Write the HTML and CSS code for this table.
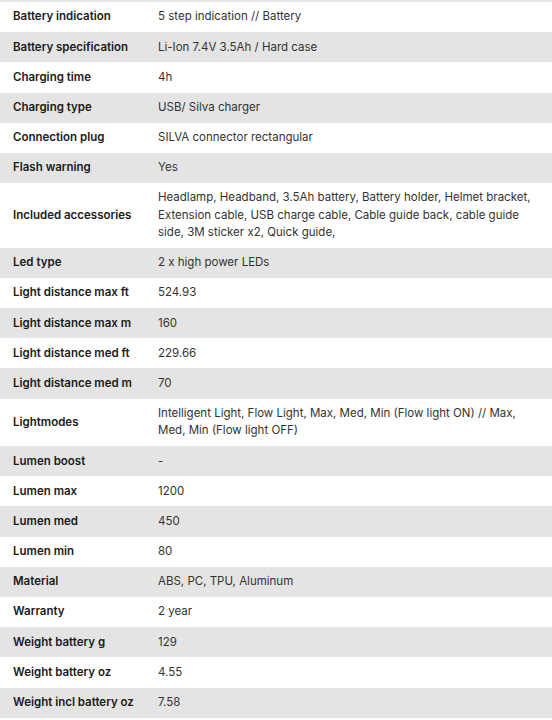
FILE: index.html
```html
<!DOCTYPE html>
<html>
<head>
<meta charset="utf-8">
<link rel="stylesheet" href="styles.css">
</head>
<body>
<div class="top"></div>
<div class="specs">
  <div class="row"><div class="k">Battery indication</div><div class="v">5 step indication // Battery</div></div>
  <div class="row"><div class="k">Battery specification</div><div class="v">Li-Ion 7.4V 3.5Ah / Hard case</div></div>
  <div class="row"><div class="k">Charging time</div><div class="v">4h</div></div>
  <div class="row"><div class="k">Charging type</div><div class="v">USB/ Silva charger</div></div>
  <div class="row"><div class="k">Connection plug</div><div class="v">SILVA connector rectangular</div></div>
  <div class="row"><div class="k">Flash warning</div><div class="v">Yes</div></div>
  <div class="row"><div class="k">Included accessories</div><div class="v">Headlamp, Headband, 3.5Ah battery, Battery holder, Helmet bracket, Extension cable, USB charge cable, Cable guide back, cable guide side, 3M sticker x2, Quick guide,</div></div>
  <div class="row"><div class="k">Led type</div><div class="v">2 x high power LEDs</div></div>
  <div class="row"><div class="k">Light distance max ft</div><div class="v">524.93</div></div>
  <div class="row"><div class="k">Light distance max m</div><div class="v">160</div></div>
  <div class="row"><div class="k">Light distance med ft</div><div class="v">229.66</div></div>
  <div class="row"><div class="k">Light distance med m</div><div class="v">70</div></div>
  <div class="row"><div class="k">Lightmodes</div><div class="v">Intelligent Light, Flow Light, Max, Med, Min (Flow light ON) // Max, Med, Min (Flow light OFF)</div></div>
  <div class="row"><div class="k">Lumen boost</div><div class="v">-</div></div>
  <div class="row"><div class="k">Lumen max</div><div class="v">1200</div></div>
  <div class="row"><div class="k">Lumen med</div><div class="v">450</div></div>
  <div class="row"><div class="k">Lumen min</div><div class="v">80</div></div>
  <div class="row"><div class="k">Material</div><div class="v">ABS, PC, TPU, Aluminum</div></div>
  <div class="row"><div class="k">Warranty</div><div class="v">2 year</div></div>
  <div class="row"><div class="k">Weight battery g</div><div class="v">129</div></div>
  <div class="row"><div class="k">Weight battery oz</div><div class="v">4.55</div></div>
  <div class="row"><div class="k">Weight incl battery oz</div><div class="v">7.58</div></div>
</div>
</body>
</html>
```
FILE: styles.css
```css
html, body {
  margin: 0;
  padding: 0;
  background: #ffffff;
}
body {
  width: 552px;
  font-family: Inter, "Noto Sans", sans-serif;
  font-size: 11.5px;
  line-height: 17.3px;
  color: #2b2b2b;
}
.top {
  height: 2px;
  background: #e4e4e4;
}
.specs {
  display: flex;
  flex-direction: column;
}
.row {
  display: grid;
  grid-template-columns: 158px 1fr;
  align-items: center;
  background: #ffffff;
}
.row:nth-child(even) {
  background: #e4e4e4;
}
.k {
  padding: 6.45px 0 6.45px 13px;
  font-weight: 600;
  color: #1a1a1a;
}
.v {
  padding: 6.45px 14px 6.45px 0;
  color: #333333;
}
```
